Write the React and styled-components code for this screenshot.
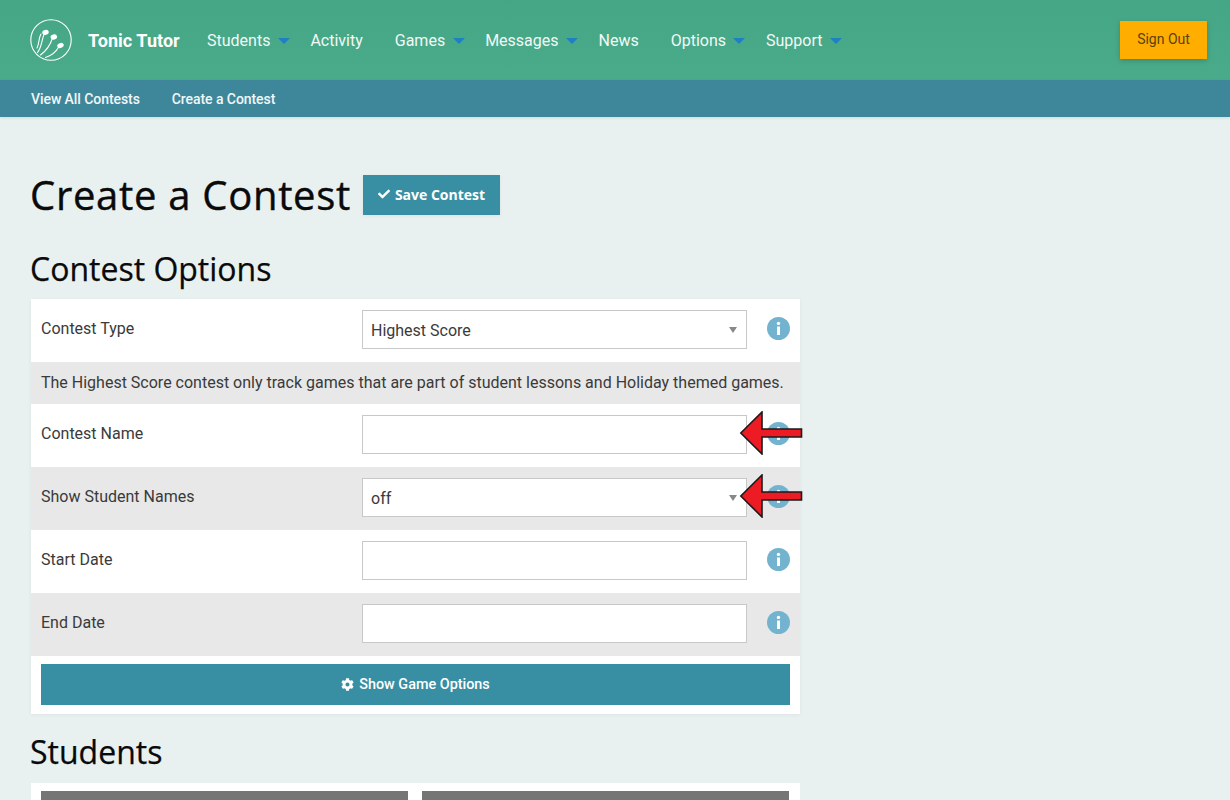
import React from 'react';
import styled, {createGlobalStyle} from 'styled-components';
import {FaCheck, FaCog} from 'react-icons/fa';

const GlobalStyle = createGlobalStyle`
  html, body {
    margin: 0;
    padding: 0;
    height: 800px;
    overflow: hidden;
    background: #e8f1f0;
    font-family: Roboto, "Liberation Sans", sans-serif;
  }
  * { box-sizing: border-box; }
`

const navItems = [
    {label: 'Students', caret: true},
    {label: 'Activity'},
    {label: 'Games', caret: true},
    {label: 'Messages', caret: true},
    {label: 'News'},
    {label: 'Options', caret: true},
    {label: 'Support', caret: true},
];

function Logo() {
    return (
        <svg width="42" height="42" viewBox="0 0 42 42" fill="none" stroke="#fff" strokeWidth="1.1" strokeLinecap="round">
            <circle cx="21" cy="21" r="20.2" />
            <path d="M7.500 33.500 C12 28 11.500 21 14.500 14" />
            <path d="M7 29 C9.500 24 8.500 19 11 15" />
            <path d="M10.500 36 C16 32 20 27 22.500 19" />
            <path d="M15.500 38.500 C22 36.500 26 33 29 27.500" />
            <ellipse cx="15.500" cy="13.300" rx="3.300" ry="2.500" fill="#fff" stroke="none" transform="rotate(-15 15.500 13.300)" />
            <ellipse cx="23.800" cy="18" rx="3.300" ry="2.500" fill="#fff" stroke="none" transform="rotate(-15 23.800 18)" />
            <ellipse cx="30.500" cy="26.500" rx="3.300" ry="2.500" fill="#fff" stroke="none" transform="rotate(-20 30.500 26.500)" />
        </svg>
    )
}

function InfoIcon() {
    return (
        <InfoBadge>
            <svg width="23" height="23" viewBox="0 0 23 23">
                <circle cx="11.5" cy="11.5" r="11.5" fill="#74b3cf" />
                <circle cx="11.5" cy="6.4" r="1.7" fill="#fff" />
                <rect x="10" y="9.5" width="3" height="8.5" fill="#fff" />
            </svg>
        </InfoBadge>
    )
}

function Arrow({top}) {
    return (
        <ArrowWrap $top={top}>
            <svg width="64" height="44" viewBox="0 0 64 44">
                <path d="M1.800 22 L23 1 L23 18 L62.500 18 L62.500 26 L23 26 L23 43 Z" fill="#ed1c24" stroke="#1a1a1a" strokeWidth="1.6" strokeLinejoin="miter" />
            </svg>
        </ArrowWrap>
    )
}

function Row({label, shaded, select, value}) {
    return (
        <FormRow $shaded={shaded}>
            <RowLabel>{label}</RowLabel>
            <Field>
                {value}
                {select && <SelectCaret />}
            </Field>
            <InfoIcon />
        </FormRow>
    )
}

export default function App() {
    return (
        <Page>
            <GlobalStyle />
            <TopBar>
                <Brand>
                    <Logo />
                    <BrandName>Tonic Tutor</BrandName>
                </Brand>
                <NavList>
                    {navItems.map(item => (
                        <NavItem key={item.label} $caret={item.caret}>
                            {item.label}
                            {item.caret && <NavCaret />}
                        </NavItem>
                    ))}
                </NavList>
                <SignOut>Sign Out</SignOut>
            </TopBar>
            <SubBar>
                <SubLink>View All Contests</SubLink>
                <SubLink>Create a Contest</SubLink>
            </SubBar>
            <Main>
                <TitleRow>
                    <Title>Create a Contest</Title>
                    <SaveButton>
                        <FaCheck size={12} />
                        Save Contest
                    </SaveButton>
                </TitleRow>
                <SectionTitle>Contest Options</SectionTitle>
                <Panel>
                    <Row label="Contest Type" select value="Highest Score" />
                    <Note>The Highest Score contest only track games that are part of student lessons and Holiday themed games.</Note>
                    <Row label="Contest Name" />
                    <Row label="Show Student Names" shaded select value="off" />
                    <Row label="Start Date" />
                    <Row label="End Date" shaded />
                    <ButtonRow>
                        <WideButton>
                            <FaCog size={13} />
                            Show Game Options
                        </WideButton>
                    </ButtonRow>
                </Panel>
                <Arrow top={411} />
                <Arrow top={474} />
                <SectionTitle $second>Students</SectionTitle>
                <StudentPanel>
                    <GreyHead />
                    <GreyHead />
                </StudentPanel>
            </Main>
        </Page>
    )
}

const Page = styled.div`
  position: relative;
  width: 1230px;
  height: 800px;
  overflow: hidden;
  background: #e8f1f0;
`
const TopBar = styled.header`
  display: flex;
  align-items: center;
  height: 80px;
  padding: 0 23px 0 30px;
  background: linear-gradient(180deg, #44a684 0%, #4aab8b 100%);
  color: #fff;
`
const Brand = styled.div`
  display: flex;
  align-items: center;
  gap: 16px;
  width: 177px;
  flex-shrink: 0;
`
const BrandName = styled.span`
  font-size: 18px;
  font-weight: 700;
  letter-spacing: 0.05px;
  white-space: nowrap;
`
const NavList = styled.nav`
  display: flex;
  align-items: center;
  flex: 1;
`
const NavItem = styled.div`
  display: flex;
  align-items: center;
  font-size: 16px;
  color: #f3f8f6;
  white-space: nowrap;
  margin-right: ${props => props.$caret ? '20.6px' : '32px'};
`
const NavCaret = styled.span`
  width: 0;
  height: 0;
  margin-left: 7.4px;
  margin-top: 1px;
  border-left: 6px solid transparent;
  border-right: 6px solid transparent;
  border-top: 6px solid #1f7fc4;
`
const SignOut = styled.button`
  width: 87px;
  height: 38px;
  margin-top: -1px;
  padding: 0 0 2px;
  border: none;
  background: #ffae00;
  color: #5a4210;
  font-family: Roboto, sans-serif;
  font-size: 14px;
  box-shadow: 0 2px 5px rgba(0, 0, 0, 0.18);
`
const SubBar = styled.div`
  display: flex;
  align-items: center;
  gap: 32px;
  height: 37px;
  padding-left: 31px;
  background: #3e879b;
  box-shadow: 0 1px 3px rgba(0, 0, 0, 0.1);
`
const SubLink = styled.a`
  font-size: 14px;
  font-weight: 500;
  letter-spacing: -0.07px;
  color: #f1f7f8;
`
const Main = styled.main`
  position: relative;
  padding: 58px 0 0 31px;
  width: 800px;
`
const TitleRow = styled.div`
  display: flex;
  align-items: center;
  gap: 12px;
  height: 40px;
`
const Title = styled.h1`
  margin: 0 0 0 -1px;
  font-family: "Open Sans", sans-serif;
  font-size: 40px;
  font-weight: 400;
  line-height: 40px;
  letter-spacing: 0.7px;
  -webkit-text-stroke: 0.4px #0a0a0a;
  color: #0a0a0a;
  white-space: nowrap;
`
const SaveButton = styled.button`
  display: flex;
  align-items: center;
  justify-content: center;
  gap: 5px;
  width: 137px;
  height: 40px;
  padding: 0 0 2px;
  border: none;
  background: #388ea2;
  color: #fff;
  font-family: "Open Sans", sans-serif;
  font-size: 14px;
  font-weight: 700;
  box-shadow: 0 1px 4px rgba(0, 0, 0, 0.06);
`
const SectionTitle = styled.h2`
  margin: ${props => props.$second ? '16px 0 9px -1px' : '32px 0 8px -1px'};
  font-family: "Open Sans", sans-serif;
  font-size: 32px;
  font-weight: 400;
  line-height: 44px;
  -webkit-text-stroke: 0.25px #0a0a0a;
  color: #0a0a0a;
`
const Panel = styled.section`
  width: 769px;
  background: #fff;
  box-shadow: 0 1px 4px rgba(0, 0, 0, 0.05);
`
const FormRow = styled.div`
  display: flex;
  align-items: center;
  height: 63px;
  padding: 0 10px;
  background: ${props => props.$shaded ? '#e8e8e8' : '#fff'};
`
const RowLabel = styled.label`
  width: 321px;
  padding-bottom: 5px;
  font-size: 16px;
  color: #3a3a3a;
`
const Field = styled.div`
  position: relative;
  display: flex;
  align-items: center;
  width: 385px;
  height: 39px;
  padding: 2px 8px 0;
  margin-bottom: 2px;
  background: #fff;
  border: 1px solid #c8c8c8;
  font-size: 16px;
  color: #3a3a3a;
`
const SelectCaret = styled.span`
  position: absolute;
  right: 9px;
  top: 16px;
  width: 0;
  height: 0;
  border-left: 4px solid transparent;
  border-right: 4px solid transparent;
  border-top: 6px solid #888;
`
const InfoBadge = styled.span`
  display: flex;
  margin-left: 20px;
  margin-bottom: 4px;
`
const Note = styled.div`
  display: flex;
  align-items: center;
  height: 42px;
  padding: 0 10px 2px;
  background: #e8e8e8;
  font-size: 16px;
  color: #3a3a3a;
  white-space: nowrap;
`
const ButtonRow = styled.div`
  padding: 8px 10px 9px;
`
const WideButton = styled.button`
  display: flex;
  align-items: center;
  justify-content: center;
  gap: 5px;
  width: 100%;
  height: 41px;
  padding: 0 0 1px;
  border: none;
  background: #388ea2;
  color: #fff;
  font-family: Roboto, sans-serif;
  font-size: 14.4px;
  font-weight: 500;
`
const StudentPanel = styled.section`
  display: flex;
  gap: 14px;
  width: 769px;
  height: 40px;
  padding: 8px 11px 0 10px;
  background: #fff;
`
const GreyHead = styled.div`
  flex: 1;
  height: 32px;
  background: #757575;
`
const ArrowWrap = styled.div`
  position: absolute;
  left: 739px;
  top: ${props => props.$top - 117}px;
  display: flex;
`
